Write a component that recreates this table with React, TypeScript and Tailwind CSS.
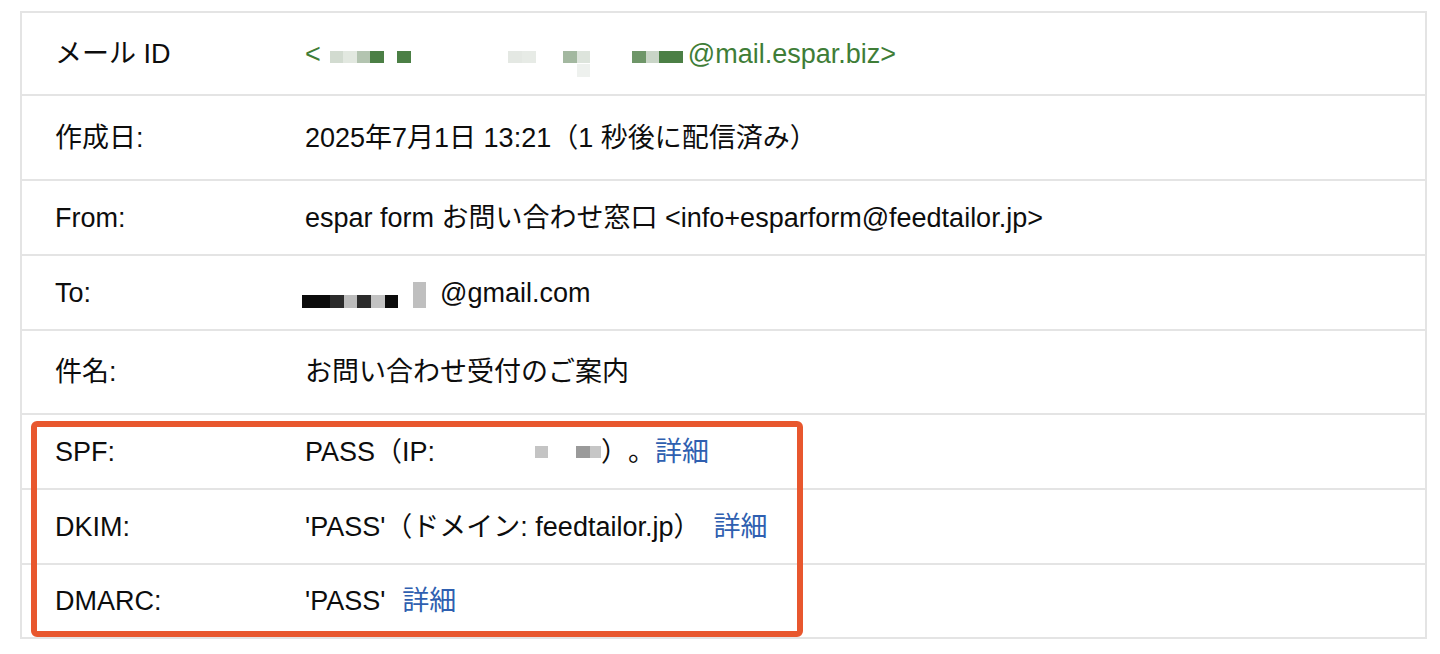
import React from 'react';

type RowProps = {
    label: React.ReactNode;
    height: string;
    children: React.ReactNode;
};

// One line of the header table: label column + value column
const Row: React.FC<RowProps> = ({ label, height, children }) => (
    <div className={`flex items-center border-t-2 border-[#e4e4e4] ${height}`}>
        <div className="w-[283px] shrink-0 pl-[33px]">{label}</div>
        <div className="flex-1 whitespace-nowrap">{children}</div>
    </div>
);

const Link: React.FC<{ className?: string; children: React.ReactNode }> = ({ className = '', children }) => (
    <a href="#" className={`text-[#2f5fb0] ${className}`}>{children}</a>
);

export default function App() {
    return (
        <div className="relative w-[1440px] h-[654px] bg-white pt-[11px] pl-[20px] font-['Liberation_Sans','Noto_Sans_CJK_JP',sans-serif] text-[27px] leading-[32px] text-[#0d0d0d] [text-spacing-trim:space-all]">
            <div className="w-[1407px] border-x-2 border-b-2 border-[#e4e4e4]">
                <Row label="メール ID" height="h-[83px]">
                    <span className="text-[#3f7d37]">
                        &lt;
                        {/* redacted local part */}
                        <span className="ml-[9px] inline-block h-[12px] w-[13px] bg-[#d2dbd0]" />
                        <span className="inline-block h-[12px] w-[14px] bg-[#e2e8e0]" />
                        <span className="inline-block h-[12px] w-[13px] bg-[#b3c4b0]" />
                        <span className="inline-block h-[12px] w-[14px] bg-[#4b7f45]" />
                        <span className="ml-[13px] inline-block h-[12px] w-[14px] bg-[#4b7f45]" />
                        <span className="ml-[97px] inline-block h-[12px] w-[14px] bg-[#e4e8e3]" />
                        <span className="inline-block h-[12px] w-[14px] bg-[#e7ebe6]" />
                        <span className="ml-[27px] inline-block h-[12px] w-[14px] bg-[#a3b8a0]" />
                        <span className="relative inline-block h-[12px] w-[13px] bg-[#dde4dc]">
                            <span className="absolute left-0 top-[13px] h-[13px] w-[13px] bg-[#eef1ee]" />
                        </span>
                        <span className="ml-[42px] inline-block h-[12px] w-[14px] bg-[#6e9668]" />
                        <span className="inline-block h-[12px] w-[13px] bg-[#c9d5c7]" />
                        <span className="inline-block h-[12px] w-[24px] bg-[#4b7f45]" />
                        <span className="ml-[5px]">@mail.espar.biz&gt;</span>
                    </span>
                </Row>
                <Row label="作成日:" height="h-[85px]">
                    2025年7月1日 13:21（1 秒後に配信済み）
                </Row>
                <Row label="From:" height="h-[75px]">
                    espar form お問い合わせ窓口 &lt;info+esparform@feedtailor.jp&gt;
                </Row>
                <Row label="To:" height="h-[75px]">
                    <span className="-ml-[3px] inline-block h-[13px] w-[28px] bg-[#0b0b0b] align-[-6px]" />
                    <span className="inline-block h-[13px] w-[14px] bg-[#2b2b2b] align-[-6px]" />
                    <span className="inline-block h-[13px] w-[13px] bg-[#bcbcbc] align-[-6px]" />
                    <span className="inline-block h-[13px] w-[14px] bg-[#2b2b2b] align-[-6px]" />
                    <span className="inline-block h-[13px] w-[14px] bg-[#c2c2c2] align-[-6px]" />
                    <span className="inline-block h-[13px] w-[13px] bg-[#0b0b0b] align-[-6px]" />
                    <span className="ml-[15px] inline-block h-[26px] w-[13px] bg-[#bfbfbf] align-[-6px]" />
                    <span className="ml-[14px]">@gmail.com</span>
                </Row>
                <Row label="件名:" height="h-[84px]">
                    お問い合わせ受付のご案内
                </Row>
                <Row label="SPF:" height="h-[75px]">
                    PASS（IP:
                    <span className="ml-[100px] inline-block h-[12px] w-[13px] bg-[#c4c4c4] align-[3px]" />
                    <span className="ml-[28px] inline-block h-[12px] w-[14px] bg-[#9a9a9a] align-[3px]" />
                    <span className="inline-block h-[12px] w-[11px] bg-[#c6c6c6] align-[3px]" />
                    ）。<Link>詳細</Link>
                </Row>
                <Row label="DKIM:" height="h-[75px]">
                    'PASS'（ドメイン: feedtailor.jp）<Link className="ml-[13px]">詳細</Link>
                </Row>
                <Row label="DMARC:" height="h-[74px]">
                    'PASS'<Link className="ml-[17px]">詳細</Link>
                </Row>
            </div>

            {/* highlight around the authentication results */}
            <div className="pointer-events-none absolute left-[31px] top-[421px] h-[216px] w-[772px] rounded-[6px] border-[6px] border-[#e8572e]" />
        </div>
    );
}
